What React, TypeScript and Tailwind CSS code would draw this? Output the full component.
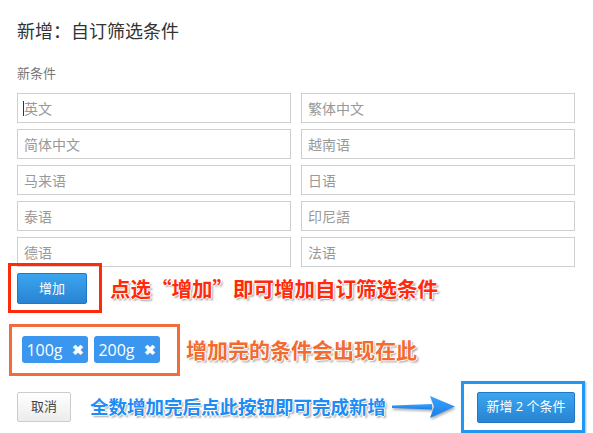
import React from 'react'

const fields = ['英文', '繁体中文', '简体中文', '越南语', '马来语', '日语', '泰语', '印尼語', '德语', '法语']
const tags = ['100g', '200g']

const font = { fontFamily: '"Open Sans", "Noto Sans CJK SC", sans-serif' }
const cjkFont = { fontFamily: '"Noto Sans CJK SC", "Open Sans", sans-serif' }

// call-out text gets a white rim plus a soft drop shadow
const calloutShadow =
    '[text-shadow:-1px_0_0_#fff,1px_0_0_#fff,0_-1px_0_#fff,0_1px_0_#fff,2px_2px_2px_rgba(0,0,0,0.35)]'

const Arrow = () => (
    <svg width="64" height="26" viewBox="0 0 64 26" className="drop-shadow-[1px_2px_1px_rgba(0,0,0,0.3)]">
        <defs>
            <linearGradient id="arrowFill" x1="0" y1="0" x2="0" y2="1">
                <stop offset="0" stopColor="#3aa2ff" />
                <stop offset="1" stopColor="#1a7ee6" />
            </linearGradient>
        </defs>
        <polygon points="0,11.5 40,10 40,15.5 0,14" fill="url(#arrowFill)" />
        <polygon points="38,2 63,12.5 38,24 42,12.5" fill="url(#arrowFill)" />
    </svg>
)

const App = () => {
    return (
        <div className="w-[593px] h-[433px] bg-white overflow-hidden pl-[17px] pr-[18px]" style={font}>
            <div className="pt-[19px] text-[18px] leading-[24px] text-[#333]">新增：自订筛选条件</div>
            <div className="mt-[21px] text-[13px] leading-[18px] text-[#777]">新条件</div>

            {/* language inputs */}
            <div className="mt-[11px] grid grid-cols-2 gap-x-[10px] gap-y-[6px]">
                {fields.map((name, i) => (
                    <div key={name} className="relative">
                        <input
                            placeholder={name}
                            className="block w-full h-[30px] border border-[#cfcfcf] px-[6px] text-[14px] text-[#333] placeholder:text-[#999] outline-none"
                            style={font}
                        />
                        {i === 0 && <span className="absolute left-[6px] top-[8px] w-px h-[15px] bg-[#333]" />}
                    </div>
                ))}
            </div>

            {/* add button */}
            <div className="mt-[6px] flex items-center">
                <div className="relative">
                    <button className="w-[70px] h-[31px] rounded-[2px] border border-[#2177c2] bg-gradient-to-b from-[#3ca5ef] to-[#2884d2] text-white text-[13px]">
                        增加
                    </button>
                    <span className="absolute left-[-9px] top-[-10px] w-[94px] h-[50px] border-[3px] border-[#ff2a0a]" />
                </div>
                <span className={`ml-[23px] text-[20.5px] font-bold text-[#ff2a0a] ${calloutShadow}`} style={cjkFont}>
                    点选“增加”即可增加自订筛选条件
                </span>
            </div>

            {/* added tags */}
            <div className="mt-[30px] ml-[5px] flex items-center">
                <div className="relative flex gap-[6px]">
                    {tags.map((t) => (
                        <div key={t} className="w-[66px] h-[27px] rounded-[3px] bg-[#3b96f0] text-white text-[16px] flex items-center justify-center gap-[9px]">
                            <span>{t}</span>
                            <span className="text-[14px] font-bold">✖</span>
                        </div>
                    ))}
                    <span className="absolute left-[-13px] top-[-12px] w-[171px] h-[52px] border-[3px] border-[#f26b3a]" />
                </div>
                <span className={`ml-[26px] text-[21px] font-bold text-[#f26b30] ${calloutShadow}`} style={cjkFont}>
                    增加完的条件会出现在此
                </span>
            </div>

            {/* footer actions */}
            <div className="mt-[26px] flex items-center">
                <button className="w-[54px] h-[30px] rounded-[2px] border border-[#ccc] bg-gradient-to-b from-white to-[#ececec] text-[13px] text-[#444]">
                    取消
                </button>
                <span className={`ml-[19px] text-[18.5px] font-bold text-[#1e8cf5] ${calloutShadow}`} style={cjkFont}>
                    全数增加完后点此按钮即可完成新增
                </span>
                <div className="ml-[6px]">
                    <Arrow />
                </div>
                <div className="relative ml-auto">
                    <button className="w-[98px] h-[31px] rounded-[2px] border border-[#2177c2] bg-gradient-to-b from-[#3ca5ef] to-[#2884d2] text-white text-[13px]">
                        新增 2 个条件
                    </button>
                    <span className="absolute left-[-16px] top-[-11px] w-[124px] h-[52px] border-[3px] border-[#2196f3] shadow-[1px_1px_2px_rgba(0,0,0,0.3)]" />
                </div>
            </div>
        </div>
    )
}

export default App
